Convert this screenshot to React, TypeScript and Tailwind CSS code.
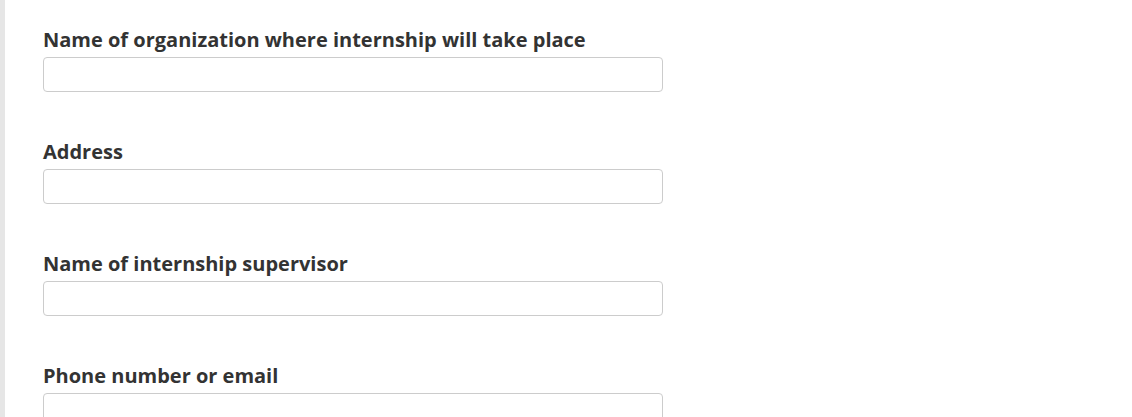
import React from 'react';

const fields = [
  'Name of organization where internship will take place',
  'Address',
  'Name of internship supervisor',
  'Phone number or email',
];

const App: React.FC = () => {
  return (
    <div className="min-h-[417px] bg-white flex" style={{ fontFamily: '"Open Sans", sans-serif' }}>
      <div className="w-[5px] shrink-0 bg-[#e6e6e6]" />
      <div className="pl-[38px] pt-[27px]">
        {fields.map((label) => (
          <div key={label} className="mb-[47px]">
            <label className="block text-[20px] leading-[25px] font-bold text-[#333] mb-[5px]">{label}</label>
            <input type="text" className="block w-[620px] h-[35px] border border-[#ccc] rounded-[4px] bg-white outline-none px-3" />
          </div>
        ))}
      </div>
    </div>
  );
};

export default App;
